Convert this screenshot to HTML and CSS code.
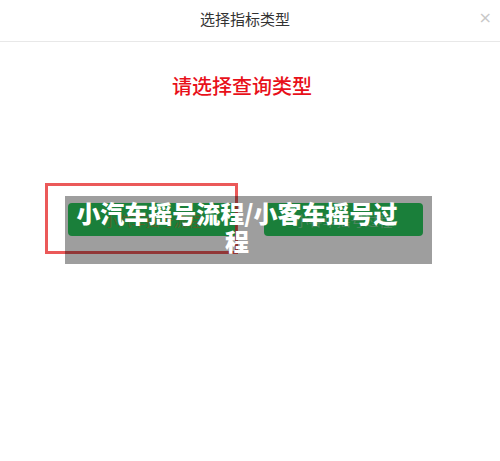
FILE: index.html
```html
<!DOCTYPE html>
<html lang="zh-CN">
<head>
<meta charset="utf-8">
<title>选择指标类型</title>
<link rel="stylesheet" href="styles.css">
</head>
<body>
<div class="dialog">
  <header class="head">
    <span class="title">选择指标类型</span>
    <span class="close">×</span>
  </header>
  <main class="content">
    <h2 class="prompt">请选择查询类型</h2>
    <div class="choices">
      <div class="highlight"></div>
      <button class="btn btn-a">小汽车摇号流程</button>
      <button class="btn btn-b">小客车摇号过程</button>
      <div class="caption">小汽车摇号流程/小客车摇号过程</div>
    </div>
  </main>
</div>
</body>
</html>
```

FILE: styles.css
```css
html, body {
  margin: 0;
  padding: 0;
  background: #fff;
}
body {
  font-family: "Noto Sans CJK SC", "Noto Sans", sans-serif;
}
.dialog {
  width: 500px;
  height: 461px;
  background: #fff;
}
.head {
  position: relative;
  height: 41px;
  border-bottom: 1px solid #e8e8e8;
  display: flex;
  align-items: center;
  justify-content: center;
  padding-right: 10px;
  box-sizing: content-box;
}
.title {
  font-size: 15px;
  color: #333;
  line-height: 20px;
  margin-top: -4px;
}
.close {
  position: absolute;
  right: 8px;
  top: 10px;
  font-size: 16px;
  line-height: 16px;
  color: #c8c8c8;
  font-family: "DejaVu Sans", sans-serif;
}
.content {
  padding-top: 30px;
}
.prompt {
  margin: 0;
  text-align: center;
  font-size: 20px;
  line-height: 28px;
  font-weight: 500;
  color: #e8101a;
  padding-right: 16px;
}
.choices {
  position: relative;
  margin-top: 103px;
  display: flex;
  gap: 27px;
  padding-left: 68px;
}
.btn {
  height: 33px;
  border: none;
  border-radius: 4px;
  background: #2acd5e;
  font-family: "Noto Sans CJK SC", sans-serif;
  font-size: 14px;
  padding: 0;
}
.btn-a {
  width: 169px;
  color: rgba(225, 120, 40, 0.55);
}
.btn-b {
  width: 159px;
  color: rgba(230, 230, 230, 0.45);
}
.highlight {
  position: absolute;
  left: 45px;
  top: -20px;
  width: 193px;
  height: 71px;
  box-sizing: border-box;
  border: 3px solid rgba(232, 60, 60, 0.85);
}
.caption {
  position: absolute;
  left: 65px;
  top: -7px;
  width: 367px;
  height: 68px;
  box-sizing: border-box;
  padding: 3px 23px 0 0;
  background: rgba(0, 0, 0, 0.38);
  color: #fff;
  font-size: 24px;
  line-height: 28px;
  font-weight: 900;
  text-align: center;
}
```
